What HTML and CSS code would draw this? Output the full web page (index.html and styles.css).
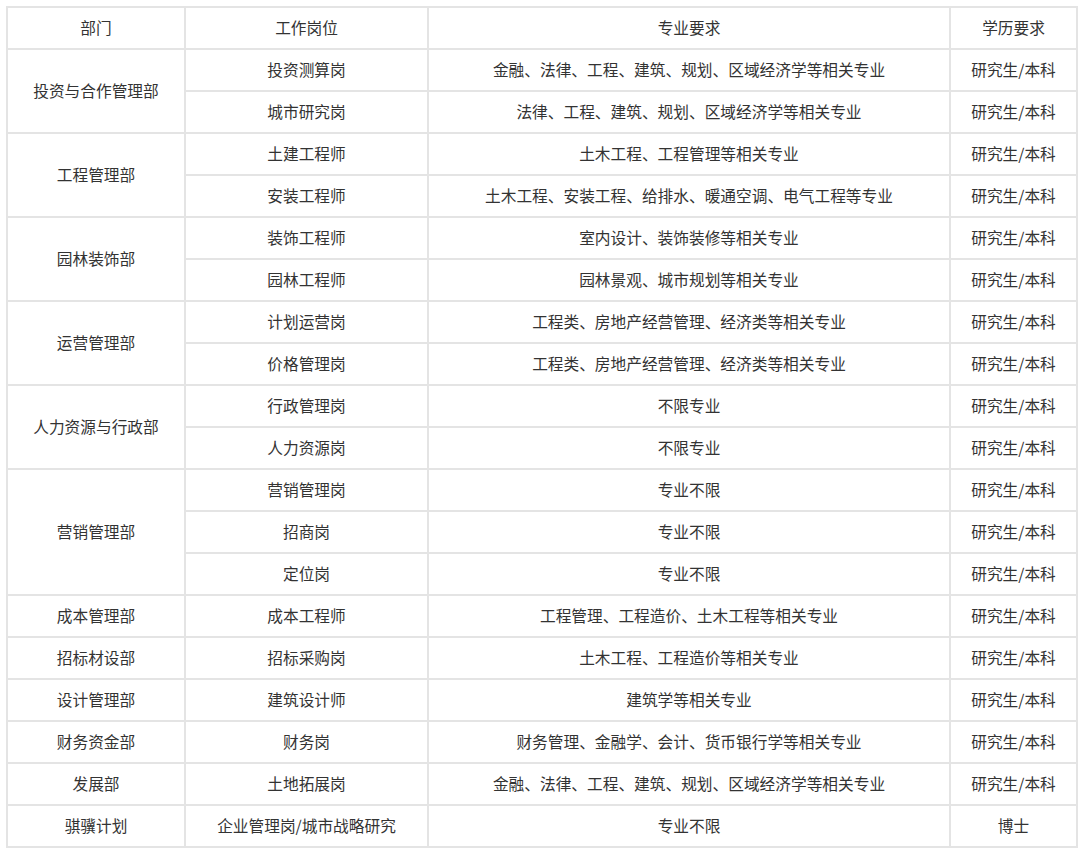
FILE: index.html
```html
<!DOCTYPE html>
<html lang="zh">
<head>
<meta charset="utf-8">
<title>岗位表</title>
<link rel="stylesheet" href="styles.css">
</head>
<body>
<table class="jobs">
<colgroup>
<col class="c1"><col class="c2"><col class="c3"><col class="c4">
</colgroup>
<tbody>
<tr><td>部门</td><td>工作岗位</td><td>专业要求</td><td>学历要求</td></tr>
<tr><td rowspan="2">投资与合作管理部</td><td>投资测算岗</td><td>金融、法律、工程、建筑、规划、区域经济学等相关专业</td><td>研究生/本科</td></tr>
<tr><td>城市研究岗</td><td>法律、工程、建筑、规划、区域经济学等相关专业</td><td>研究生/本科</td></tr>
<tr><td rowspan="2">工程管理部</td><td>土建工程师</td><td>土木工程、工程管理等相关专业</td><td>研究生/本科</td></tr>
<tr><td>安装工程师</td><td>土木工程、安装工程、给排水、暖通空调、电气工程等专业</td><td>研究生/本科</td></tr>
<tr><td rowspan="2">园林装饰部</td><td>装饰工程师</td><td>室内设计、装饰装修等相关专业</td><td>研究生/本科</td></tr>
<tr><td>园林工程师</td><td>园林景观、城市规划等相关专业</td><td>研究生/本科</td></tr>
<tr><td rowspan="2">运营管理部</td><td>计划运营岗</td><td>工程类、房地产经营管理、经济类等相关专业</td><td>研究生/本科</td></tr>
<tr><td>价格管理岗</td><td>工程类、房地产经营管理、经济类等相关专业</td><td>研究生/本科</td></tr>
<tr><td rowspan="2">人力资源与行政部</td><td>行政管理岗</td><td>不限专业</td><td>研究生/本科</td></tr>
<tr><td>人力资源岗</td><td>不限专业</td><td>研究生/本科</td></tr>
<tr><td rowspan="3">营销管理部</td><td>营销管理岗</td><td>专业不限</td><td>研究生/本科</td></tr>
<tr><td>招商岗</td><td>专业不限</td><td>研究生/本科</td></tr>
<tr><td>定位岗</td><td>专业不限</td><td>研究生/本科</td></tr>
<tr><td>成本管理部</td><td>成本工程师</td><td>工程管理、工程造价、土木工程等相关专业</td><td>研究生/本科</td></tr>
<tr><td>招标材设部</td><td>招标采购岗</td><td>土木工程、工程造价等相关专业</td><td>研究生/本科</td></tr>
<tr><td>设计管理部</td><td>建筑设计师</td><td>建筑学等相关专业</td><td>研究生/本科</td></tr>
<tr><td>财务资金部</td><td>财务岗</td><td>财务管理、金融学、会计、货币银行学等相关专业</td><td>研究生/本科</td></tr>
<tr><td>发展部</td><td>土地拓展岗</td><td>金融、法律、工程、建筑、规划、区域经济学等相关专业</td><td>研究生/本科</td></tr>
<tr><td>骐骥计划</td><td>企业管理岗/城市战略研究</td><td>专业不限</td><td>博士</td></tr>
</tbody>
</table>
</body>
</html>
```
FILE: styles.css
```css
html, body {
  margin: 0;
  padding: 0;
  background: #ffffff;
}
body {
  padding: 6px 0 0 6px;
  font-family: "Noto Sans CJK SC", "Noto Sans", sans-serif;
  font-size: 15.7px;
  color: #333333;
}
.jobs {
  border-collapse: collapse;
  table-layout: fixed;
  width: 1070px;
}
.c1 { width: 178px; }
.c2 { width: 243px; }
.c3 { width: 522px; }
.c4 { width: 127px; }
.jobs td {
  border: 2px solid #e4e4e4;
  height: 40px;
  padding: 0;
  text-align: center;
  vertical-align: middle;
  line-height: 20px;
}
```
